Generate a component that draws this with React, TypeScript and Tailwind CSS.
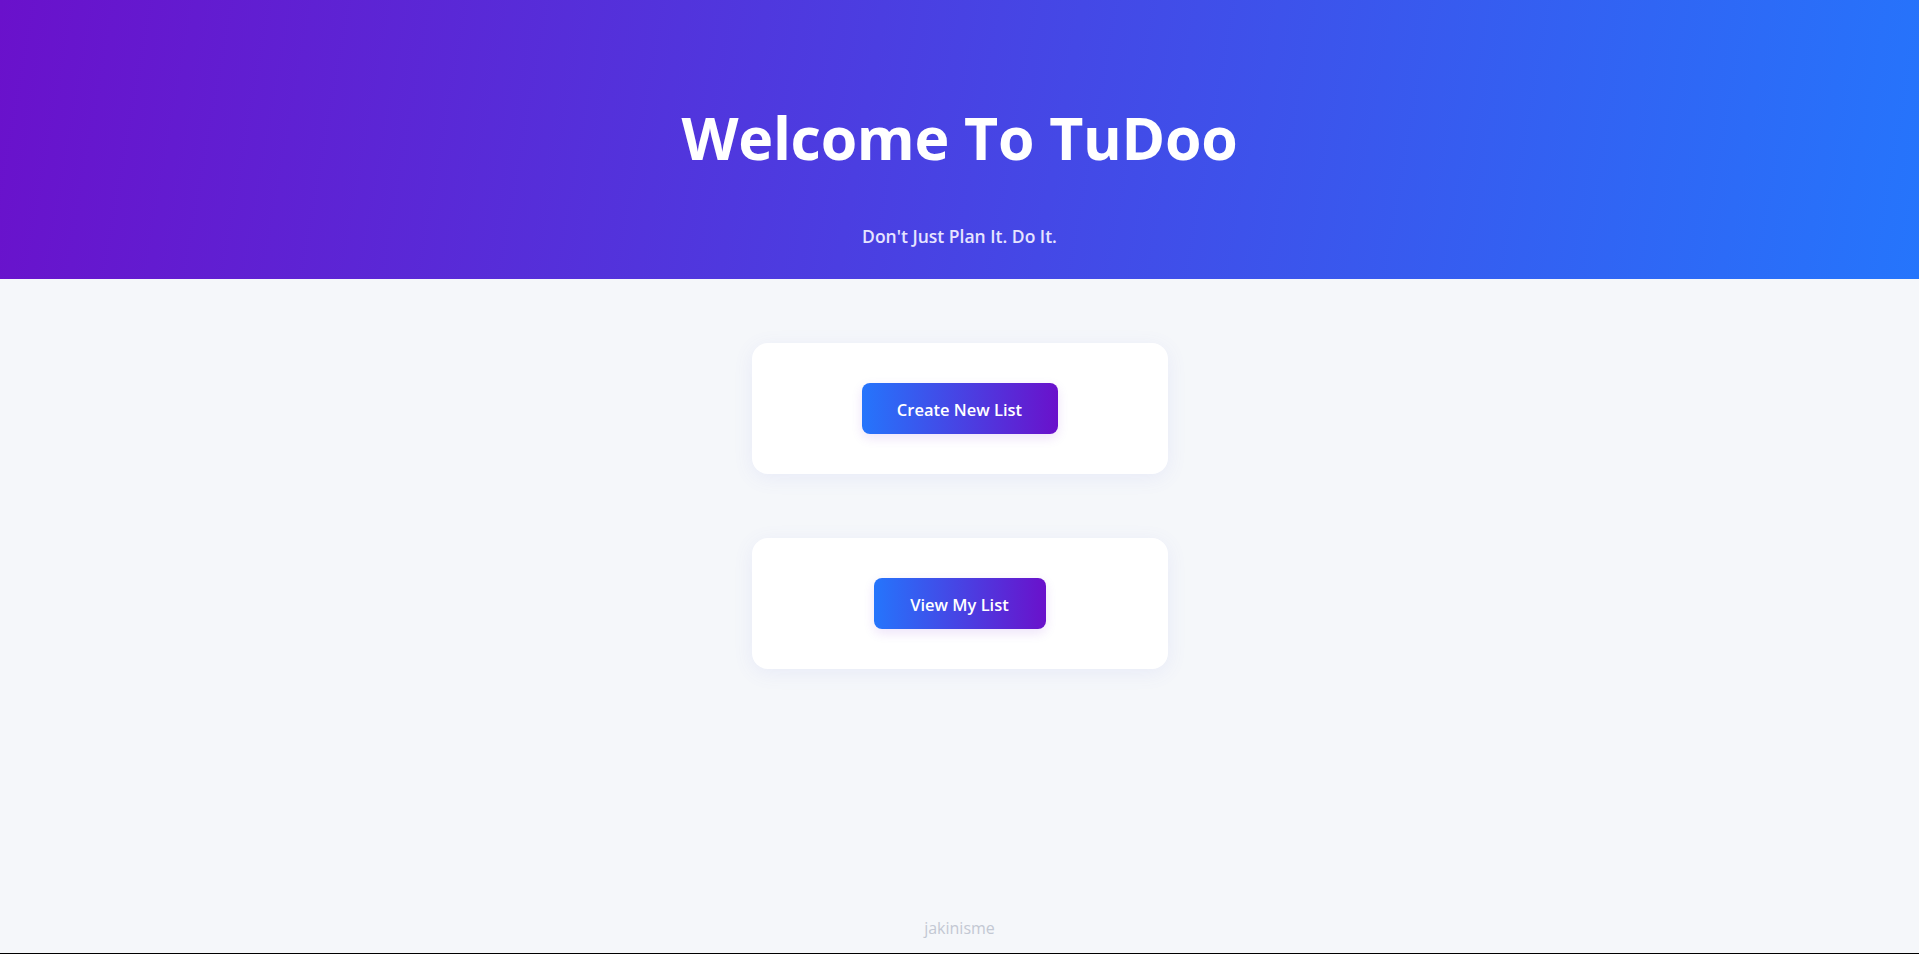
export default function App() {
  const font = { fontFamily: '"Open Sans", "Noto Sans", sans-serif' };
  return (
    <div
      className="min-h-screen flex flex-col bg-[#f5f7fa] border-b border-black"
      style={font}
    >
      <header className="h-[279px] flex flex-col items-center bg-[linear-gradient(100deg,#6a11cb,#2575fc)] text-white">
        <h1 className="mt-[99px] text-[59px] leading-[77px] font-bold tracking-[-0.3px]">
          Welcome To TuDoo
        </h1>
        <p className="mt-[47px] text-[17.5px] leading-[27px] font-semibold text-[#e6e4ff]">
          Don't Just Plan It. Do It.
        </p>
      </header>
      <main className="flex-1 flex flex-col items-center pt-[64px] gap-[64px]">
        <div className="w-[416px] bg-white rounded-[16px] p-[40px] flex justify-center shadow-[0_4px_20px_rgba(100,110,220,0.09)]">
          <button className="h-[51px] w-[196px] pt-[3px] rounded-[8px] bg-[linear-gradient(to_right,#2575fc,#6a11cb)] text-white text-[16.5px] font-semibold shadow-[0_4px_12px_rgba(106,17,203,0.12)]">
            Create New List
          </button>
        </div>
        <div className="w-[416px] bg-white rounded-[16px] p-[40px] flex justify-center shadow-[0_4px_20px_rgba(100,110,220,0.09)]">
          <button className="h-[51px] w-[172px] pt-[3px] rounded-[8px] bg-[linear-gradient(to_right,#2575fc,#6a11cb)] text-white text-[16.5px] font-semibold shadow-[0_4px_12px_rgba(106,17,203,0.12)]">
            View My List
          </button>
        </div>
      </main>
      <footer className="flex justify-center pb-[14px]">
        <span className="text-[16px] leading-[22px] text-[#c3c8d3]">jakinisme</span>
      </footer>
    </div>
  );
}
